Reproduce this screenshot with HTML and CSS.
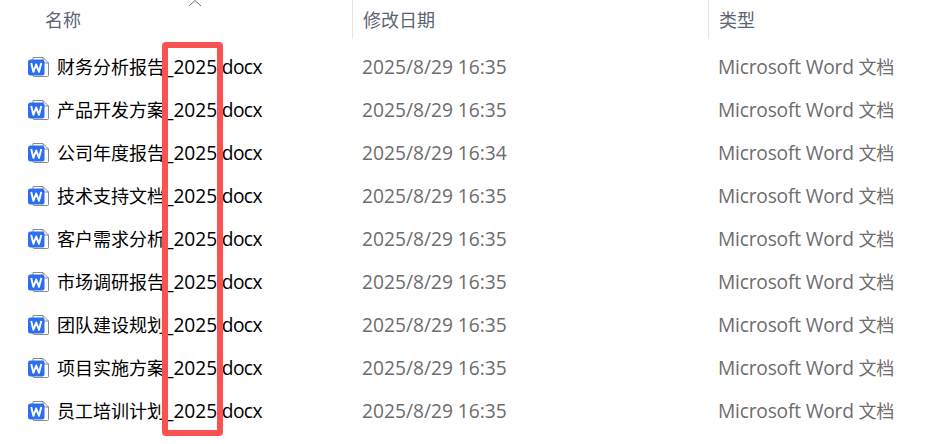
FILE: index.html
```html
<!DOCTYPE html>
<html lang="zh-CN">
<head>
    <title>文件列表</title>
    <link rel="stylesheet" href="styles.css">
</head>
<body>
    <svg class="defs">
        <symbol id="word" viewBox="0 0 22 22">
            <path d="M5 1.500H15L20.500 7V19.500Q20.500 20.500 19.500 20.500H6Q5 20.500 5 19.500Z" fill="#fff" stroke="#8a8a8a"/>
            <path d="M15 1.500V7H20.500" fill="none" stroke="#8a8a8a"/>
            <rect x="0" y="3.500" width="16.500" height="16" rx="2.500" fill="#2b6ff0"/>
            <path d="M3.200 7L5.400 15.800L8.200 8.500L11 15.800L13.300 7" fill="none" stroke="#fff" stroke-width="1.900" stroke-linejoin="round"/>
        </symbol>
    </svg>

    <svg class="sort-arrow" width="14" height="7" viewBox="0 0 14 7">
        <path d="M1 6L7 0.500L13 6" fill="none" stroke="#6a727c"/>
    </svg>

    <div class="list-header">
        <div class="col-name">名称</div>
        <div class="col-date">修改日期</div>
        <div class="col-type">类型</div>
    </div>

    <div class="file-list">
        <div class="file-row">
            <div class="file-name"><svg class="file-icon"><use href="#word"/></svg><span class="cjk">财务分析报告</span>_2025<span class="ext">.docx</span></div>
            <div class="file-date">2025/8/29 16:35</div>
            <div class="file-type">Microsoft Word <span class="cjk">文档</span></div>
        </div>
        <div class="file-row">
            <div class="file-name"><svg class="file-icon"><use href="#word"/></svg><span class="cjk">产品开发方案</span>_2025<span class="ext">.docx</span></div>
            <div class="file-date">2025/8/29 16:35</div>
            <div class="file-type">Microsoft Word <span class="cjk">文档</span></div>
        </div>
        <div class="file-row">
            <div class="file-name"><svg class="file-icon"><use href="#word"/></svg><span class="cjk">公司年度报告</span>_2025<span class="ext">.docx</span></div>
            <div class="file-date">2025/8/29 16:34</div>
            <div class="file-type">Microsoft Word <span class="cjk">文档</span></div>
        </div>
        <div class="file-row">
            <div class="file-name"><svg class="file-icon"><use href="#word"/></svg><span class="cjk">技术支持文档</span>_2025<span class="ext">.docx</span></div>
            <div class="file-date">2025/8/29 16:35</div>
            <div class="file-type">Microsoft Word <span class="cjk">文档</span></div>
        </div>
        <div class="file-row">
            <div class="file-name"><svg class="file-icon"><use href="#word"/></svg><span class="cjk">客户需求分析</span>_2025<span class="ext">.docx</span></div>
            <div class="file-date">2025/8/29 16:35</div>
            <div class="file-type">Microsoft Word <span class="cjk">文档</span></div>
        </div>
        <div class="file-row">
            <div class="file-name"><svg class="file-icon"><use href="#word"/></svg><span class="cjk">市场调研报告</span>_2025<span class="ext">.docx</span></div>
            <div class="file-date">2025/8/29 16:35</div>
            <div class="file-type">Microsoft Word <span class="cjk">文档</span></div>
        </div>
        <div class="file-row">
            <div class="file-name"><svg class="file-icon"><use href="#word"/></svg><span class="cjk">团队建设规划</span>_2025<span class="ext">.docx</span></div>
            <div class="file-date">2025/8/29 16:35</div>
            <div class="file-type">Microsoft Word <span class="cjk">文档</span></div>
        </div>
        <div class="file-row">
            <div class="file-name"><svg class="file-icon"><use href="#word"/></svg><span class="cjk">项目实施方案</span>_2025<span class="ext">.docx</span></div>
            <div class="file-date">2025/8/29 16:35</div>
            <div class="file-type">Microsoft Word <span class="cjk">文档</span></div>
        </div>
        <div class="file-row">
            <div class="file-name"><svg class="file-icon"><use href="#word"/></svg><span class="cjk">员工培训计划</span>_2025<span class="ext">.docx</span></div>
            <div class="file-date">2025/8/29 16:35</div>
            <div class="file-type">Microsoft Word <span class="cjk">文档</span></div>
        </div>
    </div>

    <!-- Red highlight over the year -->
    <div class="highlight"></div>
</body>
</html>
```

FILE: styles.css
```css
body {
    font-family: "Open Sans", "Noto Sans CJK SC", sans-serif;
    font-size: 19.2px;
    background-color: #fff;
    margin: 0;
    padding: 0;
    overflow: hidden;
}

.cjk {
    font-family: "Noto Sans CJK SC", sans-serif;
    font-size: 18px;
}

.ext {
    letter-spacing: -0.6px;
}

.defs {
    display: none;
}

.sort-arrow {
    position: absolute;
    left: 188px;
    top: 0;
}

.list-header {
    display: grid;
    grid-template-columns: 352px 356px 1fr;
    height: 39px;
    color: #5a6472;
    font-family: "Noto Sans CJK SC", sans-serif;
    font-size: 18px;
}

.list-header div {
    line-height: 39px;
}

.col-name {
    padding-left: 45px;
}

.col-date,
.col-type {
    border-left: 1px solid #e5e5e5;
    padding-left: 10px;
}

.file-list {
    padding-top: 6px;
}

.file-row {
    display: grid;
    grid-template-columns: 352px 356px 1fr;
    height: 43px;
    line-height: 43px;
    white-space: nowrap;
}

.file-name {
    display: flex;
    align-items: center;
    color: #000;
    padding-left: 28px;
}

.file-icon {
    width: 22px;
    height: 22px;
    margin-right: 7px;
    flex-shrink: 0;
}

.file-date,
.file-type {
    color: #6d6d6d;
    padding-left: 10px;
}

.file-type {
    letter-spacing: -0.2px;
}

.highlight {
    position: absolute;
    left: 162px;
    top: 42px;
    width: 49px;
    height: 382px;
    border: 6px solid #fa5151;
    border-radius: 4px;
}
```
